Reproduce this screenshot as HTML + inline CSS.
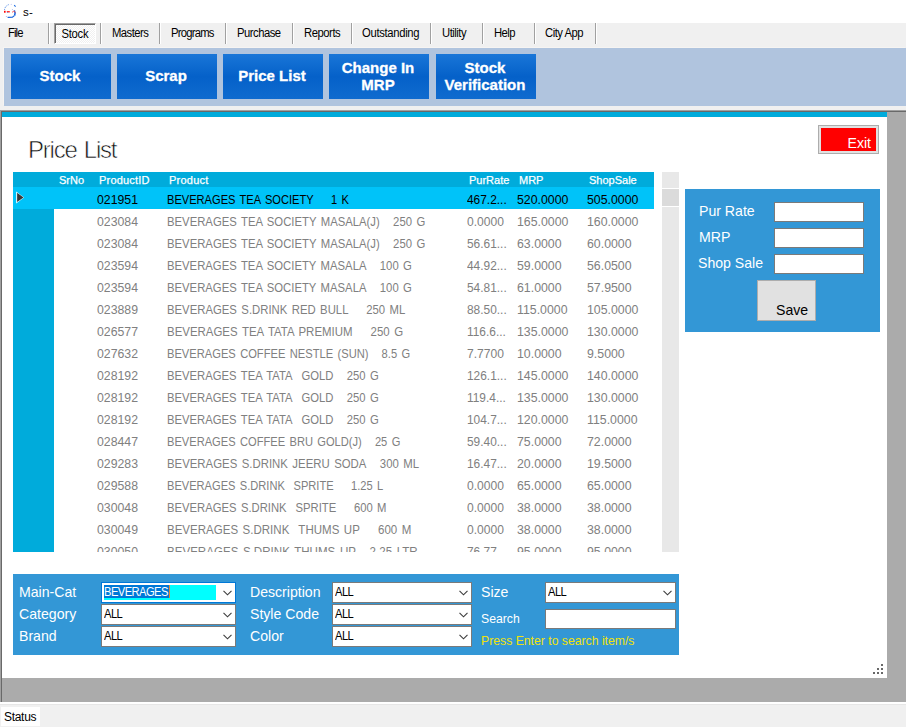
<!DOCTYPE html>
<html lang="en">
<head>
<meta charset="utf-8">
<title>s-</title>
<style>
*{box-sizing:border-box;margin:0;padding:0}
html,body{width:906px;height:727px;overflow:hidden;background:#fff}
body{position:relative;font-family:"Liberation Sans",sans-serif;font-size:12px;color:#000}
.abs,.mi,.sep,.tb,.lbl,.combo,.inp,.row,.c,.hd{position:absolute}
#titlebar{position:absolute;left:0;top:0;width:906px;height:23px;background:#fff}
#title{position:absolute;left:23px;top:5px;font-size:11.5px;line-height:15px;letter-spacing:0.3px}
#menubar{position:absolute;left:0;top:23px;width:906px;height:87px;background:#f0f0f0}
.mi{top:0;height:20px;line-height:20px;font-size:12.5px;white-space:nowrap;letter-spacing:-0.3px;transform:scaleX(.9);transform-origin:0 50%}
.sep{top:0;width:2px;height:21px;border-left:1px solid #a0a0a0;border-right:1px solid #fff}
#stockmi{position:absolute;left:54px;top:0;width:42px;height:21px;border:1px solid;border-color:#a0a0a0 #fff #fff #a0a0a0;box-shadow:inset 1px 1px 0 #696969;background:repeating-conic-gradient(#fff 0 25%,#f0f0f0 0 50%) 0 0/2px 2px;font-size:12.5px;line-height:21px;text-align:center;letter-spacing:-0.3px}
#stockmi span{display:inline-block;transform:scaleX(.9)}
#toolbar{position:absolute;left:4px;top:48px;width:902px;height:58px;background:#b0c4de;box-shadow:-1px -1px 0 #f6f4f2}
.tb{top:6px;width:100px;height:45px;background:linear-gradient(#1976d8,#0561c9 50%,#0f6bcf);color:#fff;font-weight:bold;font-size:15px;line-height:17px;text-align:center;display:flex;align-items:center;justify-content:center;padding:0 2px 2px 0;-webkit-text-stroke:0.3px #fff}
#mdi{position:absolute;left:0;top:106px;width:906px;height:599px;background:#ababab}
#form{position:absolute;left:2px;top:112px;width:885px;height:566px;background:#fff}
#strip{position:absolute;left:0;top:0;width:885px;height:5px;background:#00abdb}
#h1{position:absolute;left:26px;top:23px;font-size:24px;line-height:30px;letter-spacing:-1.2px;word-spacing:1.6px;color:#111;white-space:nowrap;-webkit-text-stroke:0.6px #fff}
#grid{position:absolute;left:11px;top:60px;width:641px;height:380px;overflow:hidden;background:#fff}
#ghead{position:absolute;left:0;top:0;width:641px;height:15px;background:#00abdb}
#rhead{position:absolute;left:0;top:15px;width:41px;height:365px;background:#00abdb}
.hd{top:1px;height:15px;line-height:15px;font-size:11px;color:#fff;white-space:nowrap;-webkit-text-stroke:0.25px #fff}
.row{left:41px;width:600px;height:22px;color:#808080;font-size:13px;line-height:22px;white-space:nowrap}
.row.sel{left:0;width:641px;background:#00c3f9;color:#000}
.row.sel .c{margin-left:41px}
.c{top:3px;height:20px;line-height:20px;transform-origin:0 0}
.c1{transform:scaleX(.945)}.c4,.c5{transform:scaleX(.948)}
.c1{left:43px}.c2{left:113px}.c3{left:413px}.c4{left:463px}.c5{left:533px}
#vs{position:absolute;left:660px;top:60px;width:17px;height:380px;background:#e8e8e8}
#panel{position:absolute;left:683px;top:77px;width:195px;height:143px;background:#3397d6}
.lbl{color:#fff;font-size:15px;line-height:18px;white-space:nowrap;transform:scaleX(.94);transform-origin:0 50%}
.inp{background:#fff;border:1px solid #7a7a7a}
#save{position:absolute;left:72px;top:91px;width:59px;height:41px;background:#e1e1e1;border:1px solid #adadad;font-size:15px;line-height:18px}
#save span{position:absolute;left:18px;top:20px;transform:scaleX(.94);transform-origin:0 50%}
#exit{position:absolute;left:816px;top:13px;width:61px;height:29px;border:1px solid #adadad;background:#e1e1e1}
#exit b{position:absolute;left:2px;top:2px;width:55px;height:23px;background:#ff0000;color:#fff;font-weight:normal;font-size:15px;line-height:18px;text-align:right;padding:6px 5px 0 0}
#exit b span{display:inline-block;transform:scaleX(.94);transform-origin:100% 50%}
#filt{position:absolute;left:11px;top:462px;width:666px;height:81px;background:#3397d6}
.combo{height:21px;background:#fff;border:1px solid #7a7a7a;font-size:12px;line-height:17px;padding-left:2px;letter-spacing:-0.6px}
.combo svg{position:absolute;right:3px;top:7px}
.combo u{position:absolute;left:2px;top:1px;text-decoration:none;transform:scaleX(.93);transform-origin:0 50%;white-space:nowrap}
#status{position:absolute;left:0;top:702px;width:906px;height:25px;background:#f0f0f0;border-top:2px solid #fff;box-shadow:inset 0 1px 0 #e6e6e6}
#stl{position:absolute;left:1px;top:3px;width:39px;height:19px;background:#fefefe;font-size:12px;line-height:20px;padding-left:3px;letter-spacing:-0.3px}
</style>
</head>
<body>
<div id="titlebar">
<svg class="abs" style="left:0;top:0" width="22" height="23" viewBox="0 0 22 23"><path d="M4.5 10 A6.2 6.2 0 0 1 8.8 4.6" fill="none" stroke="#4d88e6" stroke-width="1" stroke-dasharray="1.1 0.9"/><circle cx="11.3" cy="4.4" r="0.6" fill="#c9cdf7"/><path d="M14.2 5.2 L15.6 6.6" stroke="#1c6be0" stroke-width="1.1"/><circle cx="12.4" cy="9.4" r="0.5" fill="#9fb8ee"/><path d="M14.3 10.3 A6 6 0 0 1 14.6 15.6" fill="none" stroke="#1462dc" stroke-width="1.5"/><path d="M7.6 17.4 L12.4 17.2 L14.4 15.6" fill="none" stroke="#1462dc" stroke-width="1.2"/><circle cx="6.3" cy="16.5" r="0.5" fill="#8aa8ea"/><rect x="4" y="10.8" width="1.6" height="1.9" fill="#f00"/><rect x="6.8" y="11" width="3" height="1.5" fill="#f33"/><rect x="7.2" y="12" width="0.9" height="0.8" fill="#39f"/><path d="M12 12.4 L13.8 11 L15.4 12.6" fill="none" stroke="#f44" stroke-width="0.9"/></svg>
<span id="title">s-</span>
</div>
<div id="menubar"><span class="mi" style="left:8px;letter-spacing:-1.0px">File</span><span class="mi" style="left:112px;letter-spacing:-0.6px">Masters</span><span class="mi" style="left:171px;letter-spacing:-0.85px">Programs</span><span class="mi" style="left:237px;letter-spacing:-0.55px">Purchase</span><span class="mi" style="left:304px;letter-spacing:-0.5px">Reports</span><span class="mi" style="left:362px;letter-spacing:-0.35px">Outstanding</span><span class="mi" style="left:442px;letter-spacing:-0.55px">Utility</span><span class="mi" style="left:494px;letter-spacing:-0.65px">Help</span><span class="mi" style="left:545px;letter-spacing:-0.55px">City App</span><i class="sep" style="left:48px"></i><i class="sep" style="left:100px"></i><i class="sep" style="left:159px"></i><i class="sep" style="left:225px"></i><i class="sep" style="left:292px"></i><i class="sep" style="left:351px"></i><i class="sep" style="left:430px"></i><i class="sep" style="left:482px"></i><i class="sep" style="left:534px"></i><i class="sep" style="left:595px"></i><span id="stockmi"><span>Stock</span></span></div>
<div id="toolbar">
<div class="tb" style="left:7px">Stock</div>
<div class="tb" style="left:113px">Scrap</div>
<div class="tb" style="left:219px">Price List</div>
<div class="tb" style="left:325px">Change In<br>MRP</div>
<div class="tb" style="left:432px">Stock<br>Verification</div>
</div>
<div id="mdi">
<div class="abs" style="left:0;top:0;width:906px;height:4px;background:#f0f0f0"></div>
<div class="abs" style="left:0;top:4px;width:906px;height:1px;background:#a0a0a0"></div>
<div class="abs" style="left:0;top:5px;width:906px;height:1px;background:#696969"></div>
<div class="abs" style="left:0;top:4px;width:1px;height:593px;background:#a0a0a0"></div>
<div class="abs" style="left:1px;top:5px;width:1px;height:592px;background:#696969"></div>
</div>
<div id="form">
<div id="strip"></div>
<div id="h1">Price List</div>
<div id="exit"><b><span>Exit</span></b></div>
<div id="grid">
<div id="ghead">
<span class="hd" style="left:46px">SrNo</span><span class="hd" style="left:86px;letter-spacing:.2px">ProductID</span><span class="hd" style="left:156px;letter-spacing:.25px">Product</span><span class="hd" style="left:456px">PurRate</span><span class="hd" style="left:506px">MRP</span><span class="hd" style="left:576px">ShopSale</span>
</div>
<div id="rhead"></div>
<div class="row sel" style="top:15px"><span class="c c1">021951</span><span class="c c2" style="word-spacing:1.5px;transform:scaleX(0.8533)">BEVERAGES TEA SOCIETY&nbsp;&nbsp;&nbsp;&nbsp;1 K</span><span class="c c3" style="transform:scaleX(0.915)">467.2...</span><span class="c c4">520.0000</span><span class="c c5">505.0000</span></div>
<div class="row" style="top:37px"><span class="c c1">023084</span><span class="c c2" style="word-spacing:1.5px;transform:scaleX(0.8699)">BEVERAGES TEA SOCIETY MASALA(J)&nbsp;&nbsp;&nbsp;250 G</span><span class="c c3" style="transform:scaleX(0.93)">0.0000</span><span class="c c4">165.0000</span><span class="c c5">160.0000</span></div>
<div class="row" style="top:59px"><span class="c c1">023084</span><span class="c c2" style="word-spacing:1.5px;transform:scaleX(0.8699)">BEVERAGES TEA SOCIETY MASALA(J)&nbsp;&nbsp;&nbsp;250 G</span><span class="c c3" style="transform:scaleX(0.915)">56.61...</span><span class="c c4">63.0000</span><span class="c c5">60.0000</span></div>
<div class="row" style="top:81px"><span class="c c1">023594</span><span class="c c2" style="word-spacing:1.5px;transform:scaleX(0.8694)">BEVERAGES TEA SOCIETY MASALA&nbsp;&nbsp;&nbsp;100 G</span><span class="c c3" style="transform:scaleX(0.915)">44.92...</span><span class="c c4">59.0000</span><span class="c c5">56.0500</span></div>
<div class="row" style="top:103px"><span class="c c1">023594</span><span class="c c2" style="word-spacing:1.5px;transform:scaleX(0.8694)">BEVERAGES TEA SOCIETY MASALA&nbsp;&nbsp;&nbsp;100 G</span><span class="c c3" style="transform:scaleX(0.915)">54.81...</span><span class="c c4">61.0000</span><span class="c c5">57.9500</span></div>
<div class="row" style="top:125px"><span class="c c1">023889</span><span class="c c2" style="word-spacing:1.5px;transform:scaleX(0.8713)">BEVERAGES S.DRINK RED BULL&nbsp;&nbsp;&nbsp;&nbsp;250 ML</span><span class="c c3" style="transform:scaleX(0.915)">88.50...</span><span class="c c4">115.0000</span><span class="c c5">105.0000</span></div>
<div class="row" style="top:147px"><span class="c c1">026577</span><span class="c c2" style="word-spacing:1.5px;transform:scaleX(0.8810)">BEVERAGES TEA TATA PREMIUM&nbsp;&nbsp;&nbsp;&nbsp;250 G</span><span class="c c3" style="transform:scaleX(0.915)">116.6...</span><span class="c c4">135.0000</span><span class="c c5">130.0000</span></div>
<div class="row" style="top:169px"><span class="c c1">027632</span><span class="c c2" style="word-spacing:1.5px;transform:scaleX(0.8575)">BEVERAGES COFFEE NESTLE (SUN)&nbsp;&nbsp;&nbsp;8.5 G</span><span class="c c3" style="transform:scaleX(0.93)">7.7700</span><span class="c c4">10.0000</span><span class="c c5">9.5000</span></div>
<div class="row" style="top:191px"><span class="c c1">028192</span><span class="c c2" style="word-spacing:1.5px;transform:scaleX(0.8669)">BEVERAGES TEA TATA&nbsp;&nbsp;GOLD&nbsp;&nbsp;&nbsp;250 G</span><span class="c c3" style="transform:scaleX(0.915)">126.1...</span><span class="c c4">145.0000</span><span class="c c5">140.0000</span></div>
<div class="row" style="top:213px"><span class="c c1">028192</span><span class="c c2" style="word-spacing:1.5px;transform:scaleX(0.8669)">BEVERAGES TEA TATA&nbsp;&nbsp;GOLD&nbsp;&nbsp;&nbsp;250 G</span><span class="c c3" style="transform:scaleX(0.915)">119.4...</span><span class="c c4">135.0000</span><span class="c c5">130.0000</span></div>
<div class="row" style="top:235px"><span class="c c1">028192</span><span class="c c2" style="word-spacing:1.5px;transform:scaleX(0.8669)">BEVERAGES TEA TATA&nbsp;&nbsp;GOLD&nbsp;&nbsp;&nbsp;250 G</span><span class="c c3" style="transform:scaleX(0.915)">104.7...</span><span class="c c4">120.0000</span><span class="c c5">115.0000</span></div>
<div class="row" style="top:257px"><span class="c c1">028447</span><span class="c c2" style="word-spacing:1.5px;transform:scaleX(0.8555)">BEVERAGES COFFEE BRU GOLD(J)&nbsp;&nbsp;&nbsp;25 G</span><span class="c c3" style="transform:scaleX(0.915)">59.40...</span><span class="c c4">75.0000</span><span class="c c5">72.0000</span></div>
<div class="row" style="top:279px"><span class="c c1">029283</span><span class="c c2" style="word-spacing:1.5px;transform:scaleX(0.8757)">BEVERAGES S.DRINK JEERU SODA&nbsp;&nbsp;&nbsp;300 ML</span><span class="c c3" style="transform:scaleX(0.915)">16.47...</span><span class="c c4">20.0000</span><span class="c c5">19.5000</span></div>
<div class="row" style="top:301px"><span class="c c1">029588</span><span class="c c2" style="word-spacing:1.5px;transform:scaleX(0.8535)">BEVERAGES S.DRINK&nbsp;&nbsp;SPRITE&nbsp;&nbsp;&nbsp;&nbsp;1.25 L</span><span class="c c3" style="transform:scaleX(0.93)">0.0000</span><span class="c c4">65.0000</span><span class="c c5">65.0000</span></div>
<div class="row" style="top:323px"><span class="c c1">030048</span><span class="c c2" style="word-spacing:1.5px;transform:scaleX(0.8666)">BEVERAGES S.DRINK&nbsp;&nbsp;SPRITE&nbsp;&nbsp;&nbsp;&nbsp;600 M</span><span class="c c3" style="transform:scaleX(0.93)">0.0000</span><span class="c c4">38.0000</span><span class="c c5">38.0000</span></div>
<div class="row" style="top:345px"><span class="c c1">030049</span><span class="c c2" style="word-spacing:1.5px;transform:scaleX(0.8861)">BEVERAGES S.DRINK&nbsp;&nbsp;THUMS UP&nbsp;&nbsp;&nbsp;&nbsp;600 M</span><span class="c c3" style="transform:scaleX(0.93)">0.0000</span><span class="c c4">38.0000</span><span class="c c5">38.0000</span></div>
<div class="row" style="top:367px"><span class="c c1">030050</span><span class="c c2" style="word-spacing:1.5px;transform:scaleX(0.8900)">BEVERAGES S.DRINK THUMS UP&nbsp;&nbsp;&nbsp;2.25 LTR</span><span class="c c3" style="transform:scaleX(0.915)">76.77...</span><span class="c c4">95.0000</span><span class="c c5">95.0000</span></div>
<svg class="abs" style="left:2px;top:19px" width="10" height="13" viewBox="0 0 10 13"><path d="M1.2 0.6 L9 6.5 L1.2 12.4 Z" fill="#fff"/><path d="M2.1 1.8 L8.5 6.4 L2.1 11 Z" fill="#383838"/></svg>
</div>
<div id="vs">
<div class="abs" style="left:0;top:16px;width:17px;height:19px;background:#dbdbdb;border-top:1px solid #fff;border-bottom:1px solid #fff"></div>
</div>
<div id="panel">
<span class="lbl" style="left:14px;top:13px">Pur Rate</span>
<span class="lbl" style="left:14px;top:39px">MRP</span>
<span class="lbl" style="left:13px;top:65px">Shop Sale</span>
<div class="inp" style="left:89px;top:13px;width:90px;height:20px"></div>
<div class="inp" style="left:89px;top:39px;width:90px;height:20px"></div>
<div class="inp" style="left:89px;top:65px;width:90px;height:20px"></div>
<div id="save"><span>Save</span></div>
</div>
<div id="filt">
<span class="lbl" style="left:6px;top:9px">Main-Cat</span>
<span class="lbl" style="left:6px;top:31px">Category</span>
<span class="lbl" style="left:6px;top:53px">Brand</span>
<div class="combo" style="left:88px;top:8px;width:135px;border-color:#0078d7"><span class="abs" style="left:2px;top:2px;width:112px;height:15px;background:#00ffff"></span><span class="abs" style="left:2px;top:2px;width:66px;height:13px;background:#0078d7;border-right:1px solid #e08a30"></span><u style="color:#fff;left:2px;top:1px">BEVERAGES</u><svg width="9" height="6" viewBox="0 0 9 6"><path d="M0.5 0.8 L4.5 4.8 L8.5 0.8" fill="none" stroke="#3c3c3c" stroke-width="1.1"/></svg></div>
<div class="combo" style="left:88px;top:30px;width:135px"><u>ALL</u><svg width="9" height="6" viewBox="0 0 9 6"><path d="M0.5 0.8 L4.5 4.8 L8.5 0.8" fill="none" stroke="#3c3c3c" stroke-width="1.1"/></svg></div>
<div class="combo" style="left:88px;top:52px;width:135px"><u>ALL</u><svg width="9" height="6" viewBox="0 0 9 6"><path d="M0.5 0.8 L4.5 4.8 L8.5 0.8" fill="none" stroke="#3c3c3c" stroke-width="1.1"/></svg></div>
<span class="lbl" style="left:237px;top:9px">Description</span>
<span class="lbl" style="left:237px;top:31px">Style Code</span>
<span class="lbl" style="left:237px;top:53px">Color</span>
<div class="combo" style="left:319px;top:8px;width:140px"><u>ALL</u><svg width="9" height="6" viewBox="0 0 9 6"><path d="M0.5 0.8 L4.5 4.8 L8.5 0.8" fill="none" stroke="#3c3c3c" stroke-width="1.1"/></svg></div>
<div class="combo" style="left:319px;top:30px;width:140px"><u>ALL</u><svg width="9" height="6" viewBox="0 0 9 6"><path d="M0.5 0.8 L4.5 4.8 L8.5 0.8" fill="none" stroke="#3c3c3c" stroke-width="1.1"/></svg></div>
<div class="combo" style="left:319px;top:52px;width:140px"><u>ALL</u><svg width="9" height="6" viewBox="0 0 9 6"><path d="M0.5 0.8 L4.5 4.8 L8.5 0.8" fill="none" stroke="#3c3c3c" stroke-width="1.1"/></svg></div>
<span class="lbl" style="left:468px;top:9px">Size</span>
<span class="lbl" style="left:468px;top:36px;font-size:13px">Search</span>
<span class="lbl" style="left:468px;top:58px;font-size:13px;color:#f0e20c">Press Enter to search item/s</span>
<div class="combo" style="left:532px;top:8px;width:131px"><u>ALL</u><svg width="9" height="6" viewBox="0 0 9 6"><path d="M0.5 0.8 L4.5 4.8 L8.5 0.8" fill="none" stroke="#3c3c3c" stroke-width="1.1"/></svg></div>
<div class="inp" style="left:532px;top:35px;width:131px;height:20px"></div>
</div>
<svg class="abs" style="left:871px;top:552px" width="10" height="10" viewBox="0 0 10 10" fill="#686868"><rect x="8" y="0" width="2" height="2"/><rect x="4" y="4" width="2" height="2"/><rect x="8" y="4" width="2" height="2"/><rect x="0" y="8" width="2" height="2"/><rect x="4" y="8" width="2" height="2"/><rect x="8" y="8" width="2" height="2"/></svg>
</div>
<div id="status"><div id="stl">Status</div></div>
</body>
</html>
